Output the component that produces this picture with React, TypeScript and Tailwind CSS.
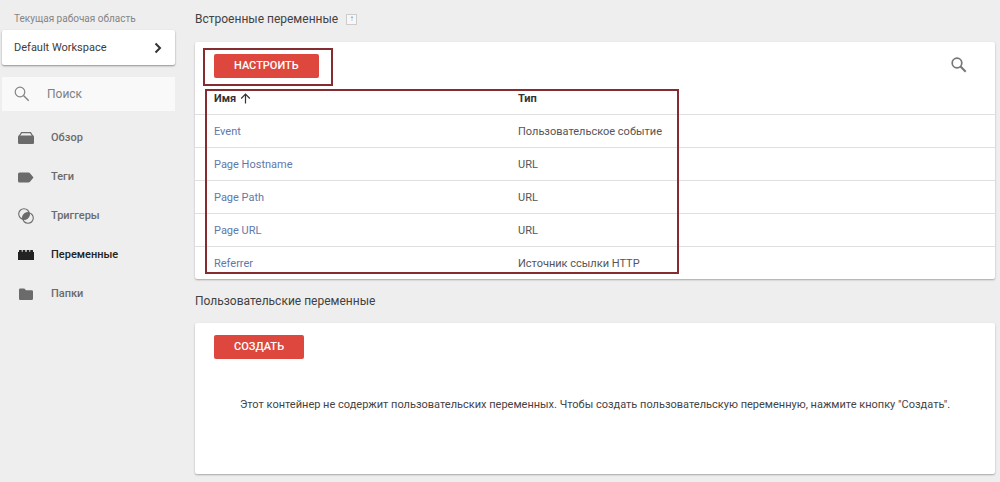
import type { ReactNode } from "react";

const variables = [
  { name: "Event", type: "Пользовательское событие" },
  { name: "Page Hostname", type: "URL" },
  { name: "Page Path", type: "URL" },
  { name: "Page URL", type: "URL" },
  { name: "Referrer", type: "Источник ссылки HTTP" },
];

function OverviewIcon() {
  return (
    <svg width="16" height="16" viewBox="0 0 16 16" aria-hidden="true">
      <path d="M1 6.500 L3.500 2.600 H12.500 L15 6.500" fill="none" stroke="currentColor" strokeWidth="1.200" />
      <rect x="0" y="5.500" width="16" height="8.500" rx="1.300" fill="currentColor" />
    </svg>
  );
}

function TagIcon() {
  return (
    <svg width="16" height="16" viewBox="0 0 16 16" aria-hidden="true">
      <path d="M1.500 3.500 H10.500 Q11.500 3.500 12 4.200 L15.500 8.500 L12 12.800 Q11.500 13.500 10.500 13.500 H1.500 Q0 13.500 0 12 V5 Q0 3.500 1.500 3.500Z" fill="currentColor" />
    </svg>
  );
}

function TriggerIcon() {
  return (
    <svg width="16" height="16" viewBox="0 0 16 16" aria-hidden="true">
      <circle cx="6" cy="6" r="5.300" fill="none" stroke="currentColor" strokeWidth="1.100" />
      <circle cx="10" cy="10" r="5.300" fill="none" stroke="currentColor" strokeWidth="1.100" />
      <path d="M11.200 4.800 A5.300 5.300 0 0 1 4.800 11.200 A5.300 5.300 0 0 1 11.200 4.800Z" fill="currentColor" stroke="currentColor" />
    </svg>
  );
}

function BrickIcon() {
  return (
    <svg width="16" height="16" viewBox="0 0 16 16" aria-hidden="true">
      <path d="M0 13 V5 H1 V3.500 Q1 3 1.500 3 H3.300 Q3.800 3 3.800 3.500 V5 H4.600 V3.500 Q4.600 3 5.100 3 H6.900 Q7.400 3 7.400 3.500 V5 H8.600 V3.500 Q8.600 3 9.100 3 H10.900 Q11.400 3 11.400 3.500 V5 H12.200 V3.500 Q12.200 3 12.700 3 H14.500 Q15 3 15 3.500 V5 H16 V13Z" fill="currentColor" />
    </svg>
  );
}

function FolderIcon() {
  return (
    <svg width="16" height="16" viewBox="0 0 16 16" aria-hidden="true">
      <path d="M2.300 2.500 H6.300 L8 4.200 H13.700 Q15 4.200 15 5.500 V12.700 Q15 14 13.700 14 H2.300 Q1 14 1 12.700 V3.800 Q1 2.500 2.300 2.500Z" fill="currentColor" />
    </svg>
  );
}

function SearchIcon({ thin = false }: { thin?: boolean }) {
  return (
    <svg className="size-4 shrink-0" viewBox="0 0 16 16" aria-hidden="true">
      <circle cx="6" cy="6" r="4.800" fill="none" stroke="currentColor" strokeWidth={thin ? 1.2 : 1.7} />
      <path d="M9.500 9.500 L14.700 14.700" stroke="currentColor" strokeWidth={thin ? 1.5 : 2.1} />
    </svg>
  );
}

const sections: { label: string; icon: ReactNode; active?: boolean }[] = [
  { label: "Обзор", icon: <OverviewIcon /> },
  { label: "Теги", icon: <TagIcon /> },
  { label: "Триггеры", icon: <TriggerIcon /> },
  { label: "Переменные", icon: <BrickIcon />, active: true },
  { label: "Папки", icon: <FolderIcon /> },
];

function Sidebar() {
  return (
    <aside className="w-[175px] shrink-0 pl-0.5">
      <p className="pt-3 pb-1 pl-3 text-[10px] leading-[14px] text-[#858585]">Текущая рабочая область</p>
      <button
        type="button"
        className="flex h-[35px] w-full items-center justify-between rounded-xs bg-white pr-3 pl-3 text-[11px] leading-[17px] text-[#3c3c3c] shadow-[0_1px_2px_rgba(0,0,0,0.4)]"
      >
        Default Workspace
        <svg width="10" height="12" viewBox="0 0 10 12" aria-hidden="true">
          <path d="M2.500 1.500 L7 6 L2.500 10.500" fill="none" stroke="#333333" strokeWidth="2" />
        </svg>
      </button>
      <label className="mt-3 flex h-[34px] items-center gap-[17px] bg-[#f9f9f9] pl-3 text-[#858585]">
        <SearchIcon thin />
        <input
          type="search"
          aria-label="Поиск"
          placeholder="Поиск"
          className="w-full min-w-0 bg-transparent text-xs outline-none placeholder:text-[#808080]"
        />
      </label>
      <nav className="mt-[7px]">
        {sections.map((section) => (
          <a
            key={section.label}
            href="#"
            aria-current={section.active ? "page" : undefined}
            className={
              section.active
                ? "flex h-[39px] items-center gap-[17px] pl-4 text-[11px] leading-[17px] font-medium text-[#222222]"
                : "flex h-[39px] items-center gap-[17px] pl-4 text-[11px] leading-[17px] font-medium text-[#6b6b6b]"
            }
          >
            {section.icon}
            {section.label}
          </a>
        ))}
      </nav>
    </aside>
  );
}

function ActionButton({ children }: { children: ReactNode }) {
  return (
    <button type="button" className="block h-6 rounded-xs bg-[#dd473d] px-5 text-[11px] font-medium text-white">
      {children}
    </button>
  );
}

export default function App() {
  return (
    <div className="flex min-h-screen gap-5 bg-[#eeeeee] pr-[5px] font-[Roboto,sans-serif] text-[#424242]">
      <Sidebar />
      <main className="min-w-0 flex-1 pb-2">
        <div className="flex h-[42px] items-center gap-2 pb-1">
          <h2 className="text-xs">Встроенные переменные</h2>
          <button
            type="button"
            aria-label="Справка"
            className="flex size-[11px] items-center justify-center border border-[#cccccc] bg-[#f7f7f7] text-[8px] text-[#777777]"
          >
            ↑
          </button>
        </div>
        <section className="relative rounded-xs bg-white shadow-[0_1px_2px_rgba(0,0,0,0.3)]">
          <div className="flex items-start justify-between pt-3 pr-7 pb-1 pl-[19px]">
            <div className="relative">
              <ActionButton>НАСТРОИТЬ</ActionButton>
              <div className="pointer-events-none absolute -top-1.5 -right-3.5 -bottom-2 -left-[11px] border-2 border-[#842c2f]" />
            </div>
            <button type="button" aria-label="Поиск переменных" className="mt-[3px] text-[#777777]">
              <SearchIcon />
            </button>
          </div>
          <table className="w-full table-fixed border-collapse text-left text-[11px] leading-[17px]">
            <thead>
              <tr className="h-8 border-b border-[#e0e0e0] text-[#333333]">
                <th className="w-[323px] pt-0.5 pl-[19px] font-bold">
                  <span className="flex items-center gap-1">
                    Имя
                    <svg width="11" height="11" viewBox="0 0 11 11" aria-hidden="true">
                      <path d="M5.500 10.500 V1.500 M1.200 5.500 L5.500 1.200 L9.800 5.500" fill="none" stroke="currentColor" strokeWidth="1.200" />
                    </svg>
                  </span>
                </th>
                <th className="pt-0.5 font-bold">Тип</th>
              </tr>
            </thead>
            <tbody>
              {variables.map((variable) => (
                <tr key={variable.name} className="h-[33px] border-b border-[#e0e0e0] last:border-b-0">
                  <td className="pt-0.5 pl-[19px]">
                    <a href="#" className="text-[#6178ac]">
                      {variable.name}
                    </a>
                  </td>
                  <td className="pt-0.5 text-[#555555]">{variable.type}</td>
                </tr>
              ))}
            </tbody>
          </table>
          <div className="pointer-events-none absolute top-[47px] bottom-[5px] left-2.5 w-[474px] border-2 border-[#842c2f]" />
        </section>
        <h2 className="flex h-11 items-center text-xs">Пользовательские переменные</h2>
        <section className="rounded-xs bg-white px-[19px] pt-3 pb-[59px] shadow-[0_1px_2px_rgba(0,0,0,0.3)]">
          <ActionButton>СОЗДАТЬ</ActionButton>
          <p className="pt-9 text-center text-[11px] leading-5 text-[#444444]">
            Этот контейнер не содержит пользовательских переменных. Чтобы создать пользовательскую переменную, нажмите
            кнопку "Создать".
          </p>
        </section>
      </main>
    </div>
  );
}
